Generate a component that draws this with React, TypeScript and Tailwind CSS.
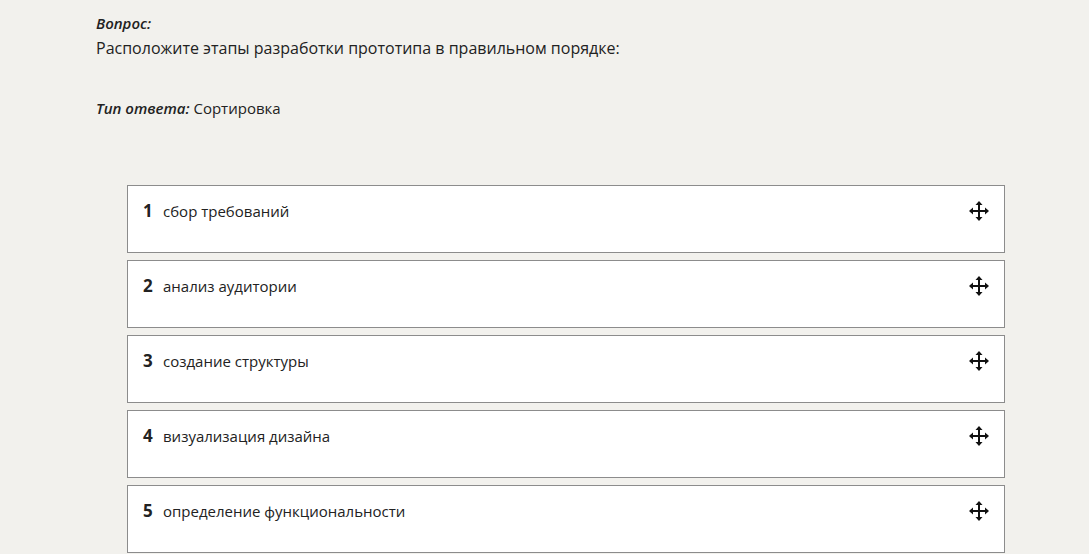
import React from 'react';

const steps = [
  'сбор требований',
  'анализ аудитории',
  'создание структуры',
  'визуализация дизайна',
  'определение функциональности',
];

function MoveIcon() {
  return (
    <svg width="22" height="22" viewBox="0 0 22 22" className="text-[#111]">
      <path d="M11 4v14M4 11h14" stroke="currentColor" strokeWidth="2" />
      <path d="M11 1l-3.5 4h7z" fill="currentColor" />
      <path d="M11 21l-3.5-4h7z" fill="currentColor" />
      <path d="M1 11l4-3.5v7z" fill="currentColor" />
      <path d="M21 11l-4-3.5v7z" fill="currentColor" />
    </svg>
  );
}

export default function App() {
  return (
    <div className="min-h-[554px] bg-[#f2f1ed] text-[#222] font-['Open_Sans',sans-serif]">
      <div className="pl-[96px] pt-[13px]">
        <p className="text-[15px] font-semibold italic leading-[20px]">Вопрос:</p>
        <p className="text-[16px] leading-[24px] mt-[3px]">
          Расположите этапы разработки прототипа в правильном порядке:
        </p>
        <p className="text-[15px] leading-[20px] mt-[38px]">
          <span className="font-semibold italic">Тип ответа:</span> Сортировка
        </p>
      </div>

      <div className="ml-[127px] w-[878px] mt-[67px] flex flex-col gap-[7px]">
        {steps.map((s, i) => (
          <div
            key={i}
            className="h-[68px] bg-white border border-[#8c8c8c] flex items-start justify-between pl-[15px] pr-[14px] pt-[14px]"
          >
            <div className="flex items-center gap-[9px] h-[22px]">
              <span className="text-[17px] font-bold w-[11px]">{i + 1}</span>
              <span className="text-[15px]">{s}</span>
            </div>
            <MoveIcon />
          </div>
        ))}
      </div>
    </div>
  );
}
